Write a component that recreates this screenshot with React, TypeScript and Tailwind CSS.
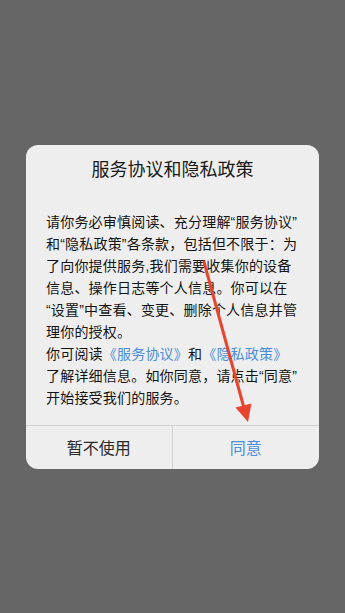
import React from "react";

const lines: React.ReactNode[] = [
  "请你务必审慎阅读、充分理解“服务协议”",
  "和“隐私政策”各条款，包括但不限于：为",
  "了向你提供服务,我们需要收集你的设备",
  "信息、操作日志等个人信息。你可以在",
  "“设置”中查看、变更、删除个人信息并管",
  "理你的授权。",
  <>
    你可阅读<span className="text-[#4a8fdc]">《服务协议》</span>和
    <span className="text-[#4a8fdc]">《隐私政策》</span>
  </>,
  "了解详细信息。如你同意，请点击“同意”",
  "开始接受我们的服务。",
];

export default function App() {
  return (
    <div
      className="relative flex h-screen w-full items-center justify-center bg-[#666666]"
      style={{ fontFamily: '"Noto Sans CJK SC", "Noto Sans", sans-serif' }}
    >
      <div className="w-[293px] overflow-hidden rounded-[12px] bg-[#eeeeee]">
        <div className="pt-[11px] text-center text-[18px] leading-[24px] text-[#1a1a1a]">
          服务协议和隐私政策
        </div>
        <div
          className="mt-[31px] px-[20px] pb-[16px] text-[14px] leading-[22px] tracking-[0.2px] text-[#141414]"
          style={{ fontFamily: '"Liberation Sans", "Noto Sans CJK SC", sans-serif' }}
        >
          {lines.map((l, i) => (
            <div key={i} className="whitespace-nowrap">
              {l}
            </div>
          ))}
        </div>
        <div className="grid h-[44px] grid-cols-2 border-t border-[#d2d2d2] text-[16px]">
          <div className="flex items-center justify-center border-r border-[#d2d2d2] text-[#2a2a2a]">
            暂不使用
          </div>
          <div className="flex items-center justify-center text-[#4a8fdc]">同意</div>
        </div>
      </div>
      <svg
        className="pointer-events-none absolute left-0 top-0"
        width="345"
        height="613"
        viewBox="0 0 345 613"
      >
        <line x1="204" y1="262" x2="244" y2="408" stroke="#e8432e" strokeWidth="3" strokeLinecap="round" />
        <polygon points="248,422 235.5,407.5 251.5,403.5" fill="#e8432e" />
      </svg>
    </div>
  );
}
